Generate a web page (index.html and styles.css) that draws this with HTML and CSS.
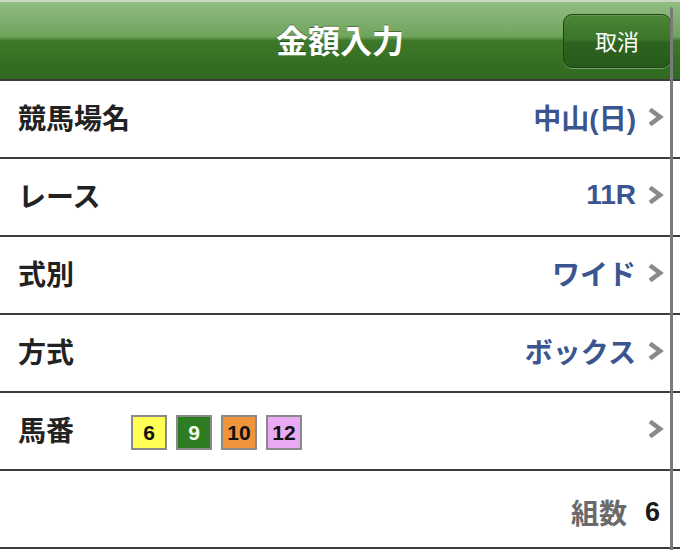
FILE: index.html
```html
<!DOCTYPE html>
<html lang="ja">
<head>
<meta charset="utf-8">
<title>金額入力</title>
<link rel="stylesheet" href="styles.css">
</head>
<body>
<div class="screen">
  <header class="navbar">
    <h1 class="title">金額入力</h1>
    <button class="cancel">取消</button>
  </header>
  <ul class="list">
    <li class="row">
      <span class="label">競馬場名</span>
      <span class="value">中山(日)</span>
      <svg class="chev" width="17" height="22" viewBox="0 0 17 22"><polyline points="3,3.5 13,11 3,18.5" fill="none" stroke="#8a8a8a" stroke-width="4.6"/></svg>
    </li>
    <li class="row">
      <span class="label">レース</span>
      <span class="value">11R</span>
      <svg class="chev" width="17" height="22" viewBox="0 0 17 22"><polyline points="3,3.5 13,11 3,18.5" fill="none" stroke="#8a8a8a" stroke-width="4.6"/></svg>
    </li>
    <li class="row">
      <span class="label">式別</span>
      <span class="value">ワイド</span>
      <svg class="chev" width="17" height="22" viewBox="0 0 17 22"><polyline points="3,3.5 13,11 3,18.5" fill="none" stroke="#8a8a8a" stroke-width="4.6"/></svg>
    </li>
    <li class="row">
      <span class="label">方式</span>
      <span class="value">ボックス</span>
      <svg class="chev" width="17" height="22" viewBox="0 0 17 22"><polyline points="3,3.5 13,11 3,18.5" fill="none" stroke="#8a8a8a" stroke-width="4.6"/></svg>
    </li>
    <li class="row">
      <span class="label label-fixed">馬番</span>
      <span class="badges">
        <span class="badge b-yellow">6</span>
        <span class="badge b-green">9</span>
        <span class="badge b-orange">10</span>
        <span class="badge b-pink">12</span>
      </span>
      <svg class="chev" width="17" height="22" viewBox="0 0 17 22"><polyline points="3,3.5 13,11 3,18.5" fill="none" stroke="#8a8a8a" stroke-width="4.6"/></svg>
    </li>
    <li class="row row-total">
      <span class="total-label">組数</span>
      <span class="total-value">6</span>
    </li>
  </ul>
  <div class="scrollbar"></div>
</div>
</body>
</html>
```
FILE: styles.css
```css
html, body {
  margin: 0;
  padding: 0;
  background: #ffffff;
}
body {
  font-family: "Liberation Sans", "Noto Sans CJK JP", sans-serif;
}
.screen {
  position: relative;
  width: 680px;
  height: 550px;
  overflow: hidden;
  background: #ffffff;
}
.navbar {
  box-sizing: border-box;
  border-top: 2px solid #c9d8c2;
  border-bottom: 2px solid #3c3c3c;
  background: linear-gradient(to bottom, #93bd83 0%, #6fa35c 45%, #3e7a2b 50%, #356f24 75%, #2f6a20 100%);
  display: flex;
  align-items: center;
  justify-content: center;
  position: relative;
  height: 81px;
  padding-bottom: 3px;
}
.title {
  margin: 0;
  color: #ffffff;
  font-size: 32px;
  font-weight: bold;
  font-family: "Noto Sans CJK JP", sans-serif;
  text-shadow: 0 -1px 0 rgba(0,0,0,0.35);
}
.cancel {
  position: absolute;
  left: 563px;
  top: 12px;
  width: 108px;
  height: 54px;
  box-sizing: border-box;
  border: 1px solid #1d4612;
  border-radius: 9px;
  background: linear-gradient(to bottom, #4a8537 0%, #3b752a 48%, #2d6320 52%, #285b1b 100%);
  box-shadow: 0 1px 0 rgba(200,230,190,0.45), inset 0 1px 0 rgba(255,255,255,0.15);
  color: #ffffff;
  font-family: "Noto Sans CJK JP", sans-serif;
  font-size: 22px;
  font-weight: normal;
  padding: 0 0 2px 0;
}
.list {
  list-style: none;
  margin: 0;
  padding: 0;
}
.row {
  display: flex;
  align-items: center;
  height: 78px;
  box-sizing: border-box;
  border-bottom: 2px solid #3c3c3c;
  padding: 0 16px 5px 18px;
}
.label {
  font-family: "Noto Sans CJK JP", sans-serif;
  font-weight: bold;
  font-size: 28px;
  color: #222222;
  flex: 1;
}
.label-fixed {
  flex: 0 0 113px;
}
.value {
  font-weight: bold;
  font-size: 28px;
  color: #3a5590;
  margin-right: 11px;
}
.chev {
  display: block;
  flex: none;
}
.badges {
  flex: 1;
  display: flex;
  gap: 9px;
  padding-top: 8px;
}
.badge {
  width: 36px;
  height: 35px;
  box-sizing: border-box;
  border: 2px solid #8a8a8a;
  display: flex;
  align-items: center;
  justify-content: center;
  font-family: "Liberation Sans", sans-serif;
  font-weight: bold;
  font-size: 21px;
  color: #111111;
}
.b-yellow { background: #ffff55; }
.b-green { background: #2f7d22; color: #f4fbf0; }
.b-orange { background: #f0953c; }
.b-pink { background: #eaa9f3; }
.row-total {
  justify-content: flex-end;
  padding-right: 20px;
  padding-top: 6px;
  padding-bottom: 0;
}
.total-label {
  font-family: "Noto Sans CJK JP", sans-serif;
  font-weight: bold;
  font-size: 28px;
  color: #6a6a6a;
  margin-right: 18px;
}
.total-value {
  font-weight: bold;
  font-size: 27px;
  color: #1a1a1a;
}
.scrollbar {
  position: absolute;
  left: 670px;
  top: 7px;
  bottom: 0;
  width: 3px;
  background: #7a7a7a;
  border-radius: 2px 2px 0 0;
}
```
